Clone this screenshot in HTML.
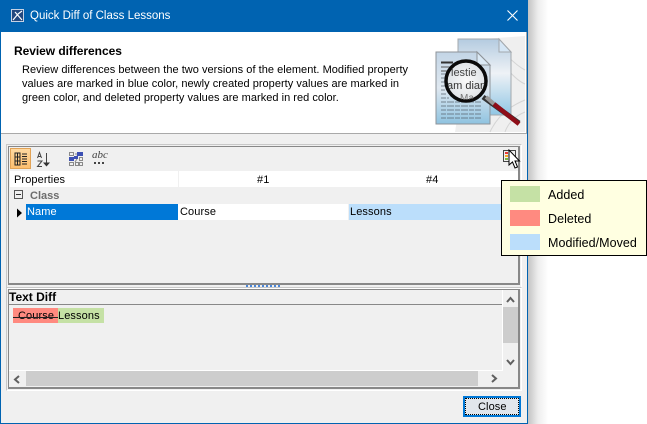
<!DOCTYPE html>
<html><head><meta charset="utf-8">
<style>
html,body{margin:0;padding:0;background:#fff}
body{width:647px;height:424px;overflow:hidden;position:relative;font:12px "Liberation Sans",sans-serif;color:#000}
.a{position:absolute}
.t{position:absolute;white-space:nowrap;line-height:15px}
.n{font-size:11px;letter-spacing:.1px}
</style></head><body>
<div class="a" style="left:528px;top:0;width:20px;height:424px;background:linear-gradient(to right,#c4c4c4,#ededed 50%,#fff)"></div>
<div class="a" style="left:0;top:0;width:528px;height:424px;background:#f0f0f0;box-sizing:border-box;border:1px solid #0063b1;border-top:0;border-bottom-width:1px"></div>
<div class="a" style="left:0;top:0;width:528px;height:32px;background:#0063b1"></div>
<svg class="a" style="left:10px;top:8px" width="16" height="16" viewBox="0 0 16 16"><rect x="1.500" y="1.500" width="12" height="12" fill="#24497f" stroke="#c6d2e4"/><path d="M3 12 L8 6 M5 4 L12 12 M8 6 L12 3" stroke="#fff" stroke-width="1.200" fill="none"/></svg>
<div class="t" style="left:30px;top:9px;color:#fff;font-size:11.500px">Quick Diff of Class Lessons</div>
<svg class="a" style="left:506px;top:9px" width="13" height="13" viewBox="0 0 13 13"><path d="M1.500 1.500 L11.500 11.500 M11.500 1.500 L1.500 11.500" stroke="#fff" stroke-width="1.100"/></svg>

<div class="a" style="left:1px;top:32px;width:526px;height:101px;background:#fff"></div>
<div class="a" style="left:1px;top:133px;width:526px;height:1px;background:#a9a9a9"></div>
<div class="t" style="left:14px;top:44px;font-weight:bold;font-size:12px;letter-spacing:-.05px">Review differences</div>
<div class="t" style="left:22px;top:63px;line-height:14px;font-size:11px;letter-spacing:.03px">Review differences between the two versions of the element. Modified property<br>values are marked in blue color, newly created property values are marked in<br>green color, and deleted property values are marked in red color.</div>

<!-- header image -->
<svg class="a" style="left:426px;top:32px" width="100" height="101" viewBox="426 32 100 101">
<defs>
<linearGradient id="d" x1="0" y1="0" x2="0" y2="1"><stop offset="0" stop-color="#c3d5e6"/><stop offset=".5" stop-color="#dfe8f0"/><stop offset="1" stop-color="#8fc3e0"/></linearGradient>
<linearGradient id="e" x1="0" y1="0" x2="0" y2="1"><stop offset="0" stop-color="#b4cbe0"/><stop offset=".45" stop-color="#eef2f6"/><stop offset="1" stop-color="#90c6e4"/></linearGradient>
<radialGradient id="l" cx=".5" cy=".5" r=".6"><stop offset="0" stop-color="#fafafa"/><stop offset="1" stop-color="#d8dde2"/></radialGradient>
<clipPath id="c"><circle cx="466" cy="81" r="19"/></clipPath>
</defs>
<path d="M470 40 L525 36 L525 132 L455 132 Z" fill="#efefef"/>
<path d="M490 132 Q500 110 525 100 M505 132 Q510 118 525 112 M500 60 Q515 80 525 84 M500 48 Q515 65 525 70" stroke="#d4d4d4" fill="none"/>
<path d="M458 39 L499 39 L511 52 L511 115 L458 115 Z" fill="url(#e)" stroke="#a3a8ad"/>
<path d="M499 39 L511 52 L499 52 Z" fill="#d5e6f5" stroke="#a3a8ad"/>
<path d="M436 52 L477 52 L490 65 L490 124 L436 124 Z" fill="url(#d)" stroke="#8e9398"/>
<path d="M477 52 L490 65 L477 65 Z" fill="#dbe9f5" stroke="#8e9398"/>
<g stroke="#5a6570" stroke-width=".8" stroke-dasharray="5 1 7 1">
<path d="M441 74H456M441 78H446M441 82H445M441 86H445M441 90H445M441 94H447M441 98H449M441 102H481M441 106H481M441 110H481M441 114H481M441 118H481"/>
</g>
<path d="M441 62.500H453" stroke="#333" stroke-width="2"/>
<path d="M441 67H455M441 71H450" stroke="#555"/>
<path d="M483 97 L519 123" stroke="#333" stroke-width="5"/>
<path d="M486 97 L494 104" stroke="#999" stroke-width="4"/>
<path d="M494 104 L519 124" stroke="#8e0d18" stroke-width="4.500"/>
<circle cx="466" cy="81" r="20" fill="url(#l)" stroke="#0a0a0a" stroke-width="3.500"/>
<g clip-path="url(#c)" font-family="Liberation Sans">
<text x="451" y="76" font-size="11" fill="#444">lestie</text>
<text x="447" y="89" font-size="11" fill="#333">am dian</text>
<text x="460" y="101" font-size="10" fill="#777">Ma</text>
</g>
</svg>
<div class="a" style="left:526px;top:32px;width:1px;height:102px;background:#a9a9a9"></div>

<!-- main panel -->
<div class="a" style="left:6px;top:144px;width:516px;height:145px;box-sizing:border-box;border:1px solid #fff;border-left-color:#c8c8c8;border-top-color:#c8c8c8"></div>
<div class="a" style="left:8px;top:146px;width:512px;height:139px;box-sizing:border-box;border:1px solid #888;border-right-width:2px;border-bottom-width:2px;background:#f0f0f0"></div>

<!-- toolbar -->
<div class="a" style="left:10px;top:148px;width:21px;height:21px;box-sizing:border-box;border:1px solid #e2a356;background:linear-gradient(#ffd9a0,#fdbf6f)"></div>
<svg class="a" style="left:14px;top:152px" width="14" height="14" viewBox="0 0 14 14"><path d="M1 1H6V13H1Z M1 5H6 M1 9H6 M3.500 1V13" stroke="#222" fill="none"/><path d="M8 2H13M8 4.500H13M8 7H13M8 9.500H13M8 12H13" stroke="#222"/></svg>
<svg class="a" style="left:36px;top:151px" width="16" height="17" viewBox="0 0 16 17"><g stroke="#444" fill="none"><path d="M1.500 7 L3.500 1.500 L5.500 7 M2 5.500H5"/><path d="M1.500 10H6L1.500 15.500H6"/><path d="M10.500 2V12"/></g><path d="M7 11.500H14L10.500 15.500Z" fill="#333"/></svg>
<svg class="a" style="left:68px;top:151px" width="16" height="16" viewBox="0 0 16 16"><g fill="none" stroke="#8a8a8a"><rect x="1.500" y="1.500" width="4" height="3"/><rect x="1.500" y="11.500" width="4" height="3"/><rect x="7.500" y="11.500" width="3" height="3"/><rect x="11.500" y="6.500" width="3" height="3"/><rect x="11.500" y="11.500" width="3" height="3"/><path d="M7 3H9M5 7L9 5M9 8L7 11"/></g><path d="M1 6H6V10H1Z M9 1H15V5H9Z M6 5H10V8H6Z" fill="#3c50b4"/></svg>
<div class="t" style="left:92px;top:149px;font:italic 11px/12px 'Liberation Serif',serif;color:#444">abc</div>
<div class="a" style="left:94px;top:162px;width:2px;height:2px;background:#444"></div>
<div class="a" style="left:98px;top:162px;width:2px;height:2px;background:#444"></div>
<div class="a" style="left:102px;top:162px;width:2px;height:2px;background:#444"></div>

<!-- table -->
<div class="a" style="left:10px;top:171px;width:168px;height:16px;background:#fff"></div>
<div class="a" style="left:179px;top:171px;width:339px;height:16px;background:#fff"></div>
<div class="t n" style="left:14px;top:173px">Properties</div>
<div class="t n" style="left:257px;top:173px">#1</div>
<div class="t n" style="left:426px;top:173px">#4</div>
<div class="a" style="left:14px;top:190px;width:9px;height:9px;box-sizing:border-box;border:1px solid #555"></div>
<div class="a" style="left:16px;top:194px;width:5px;height:1px;background:#333"></div>
<div class="t" style="left:30px;top:189px;font-weight:bold;font-size:11px;color:#6d6d6d">Class</div>
<svg class="a" style="left:15px;top:208px" width="8" height="10"><path d="M2 0.500L7 5L2 9.500Z" fill="#000"/></svg>
<div class="a" style="left:26px;top:204px;width:152px;height:16px;background:#0078d7"></div>
<div class="t n" style="left:27px;top:205px;color:#fff">Name</div>
<div class="a" style="left:178px;top:204px;width:170px;height:16px;background:#fff"></div>
<div class="t n" style="left:180px;top:205px">Course</div>
<div class="a" style="left:349px;top:204px;width:169px;height:16px;background:#bbdefb"></div>
<div class="t n" style="left:350px;top:205px">Lessons</div>

<!-- grip -->
<div class="a" style="left:246px;top:285px;width:34px;height:2px;background:repeating-linear-gradient(to right,#4a86d8 0,#4a86d8 2px,transparent 2px,transparent 4px)"></div>

<!-- text diff -->
<div class="a" style="left:6px;top:287px;width:516px;height:104px;box-sizing:border-box;border:1px solid #fff;border-left-color:#c8c8c8;border-top-color:#c8c8c8"></div>
<div class="a" style="left:8px;top:289px;width:512px;height:100px;box-sizing:border-box;border:1px solid #888;border-right-width:2px;border-bottom-width:2px"></div>
<div class="a" style="left:9px;top:304px;width:494px;height:1px;background:#888"></div>
<div class="t" style="left:9px;top:290px;font-weight:bold">Text Diff</div>
<div class="a" style="left:13px;top:308px;width:45px;height:15px;background:#ff8a80"></div>
<div class="a" style="left:58px;top:308px;width:46px;height:15px;background:#c5e1a5"></div>
<div class="t n" style="left:18px;top:309px">Course</div>
<div class="a" style="left:13px;top:317px;width:45px;height:1px;background:#222"></div>
<div class="t n" style="left:58px;top:309px">Lessons</div>

<!-- scrollbars -->
<div class="a" style="left:502px;top:290px;width:1px;height:81px;background:#fff"></div>
<div class="a" style="left:9px;top:370px;width:494px;height:1px;background:#fff"></div>
<div class="a" style="left:503px;top:307px;width:15px;height:36px;background:#cdcdcd"></div>
<div class="a" style="left:26px;top:371px;width:452px;height:15px;background:#cdcdcd"></div>
<div class="a" style="left:9px;top:371px;width:17px;height:15px;background:#f0f0f0"></div>
<svg class="a" style="left:506px;top:296px" width="9" height="8"><path d="M1 6L4.500 2L8 6" stroke="#606060" stroke-width="2" fill="none"/></svg>
<svg class="a" style="left:506px;top:358px" width="9" height="8"><path d="M1 2L4.500 6L8 2" stroke="#606060" stroke-width="2" fill="none"/></svg>
<svg class="a" style="left:13px;top:375px" width="8" height="9"><path d="M6 1L2 4.500L6 8" stroke="#606060" stroke-width="2" fill="none"/></svg>
<svg class="a" style="left:490px;top:374px" width="8" height="9"><path d="M2 1L6 4.500L2 8" stroke="#606060" stroke-width="2" fill="none"/></svg>

<!-- close button -->
<div class="a" style="left:463px;top:396px;width:58px;height:21px;box-sizing:border-box;border:2px solid #0078d7;background:#e1e6ec"></div>
<div class="a" style="left:465px;top:398px;width:54px;height:17px;box-sizing:border-box;border:1px dotted #000"></div>
<div class="t n" style="left:478px;top:400px">Close</div>

<!-- tooltip -->
<div class="a" style="left:501px;top:180px;width:146px;height:76px;box-sizing:border-box;border:1px solid #000;background:#ffffe1"></div>
<div class="a" style="left:510px;top:186px;width:30px;height:16px;background:#c5e1a5"></div>
<div class="a" style="left:510px;top:210px;width:30px;height:16px;background:#ff8a80"></div>
<div class="a" style="left:510px;top:234px;width:30px;height:16px;background:#bbdefb"></div>
<div class="t" style="left:548px;top:188px;font-size:12.500px;letter-spacing:.05px">Added</div>
<div class="t" style="left:548px;top:212px;font-size:12.500px;letter-spacing:.05px">Deleted</div>
<div class="t" style="left:548px;top:236px;font-size:12.500px;letter-spacing:.05px">Modified/Moved</div>

<!-- legend icon + cursor -->
<svg class="a" style="left:502px;top:149px" width="20" height="22" viewBox="0 0 20 22">
<rect x="1.500" y="1.500" width="12" height="11" fill="#f0f0f0" stroke="#444"/>
<rect x="3" y="3" width="3" height="2" fill="#e53935"/><rect x="3" y="6" width="3" height="2" fill="#f9a825"/><rect x="3" y="9" width="3" height="2" fill="#7cb342"/>
<path d="M7 1 L7 16 L10.500 13 L13 19 L15.500 18 L13 12 L17.500 12 Z" fill="#fff" stroke="#000" stroke-width="1"/>
</svg>
</body></html>
